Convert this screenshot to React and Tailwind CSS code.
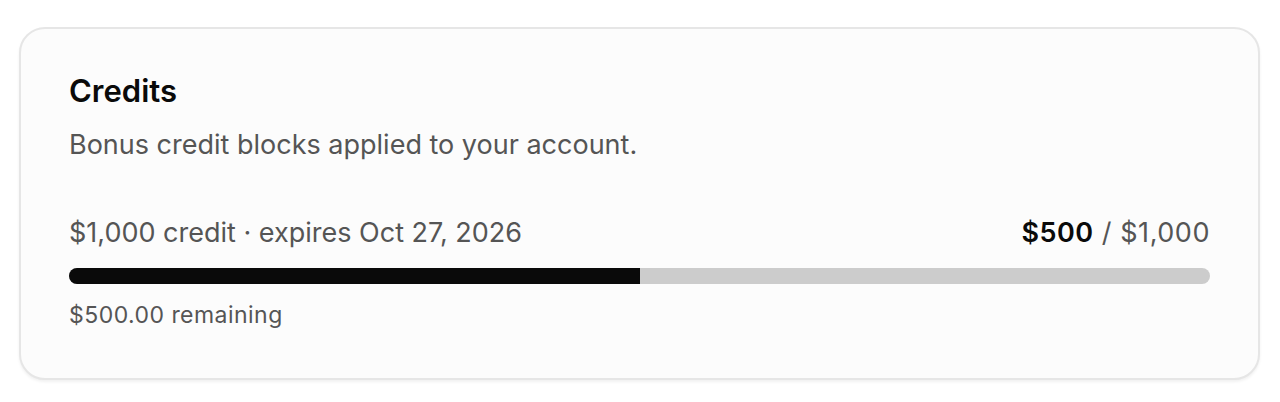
import React from "react";

const CreditsCard = () => {
    const used = 500;
    const total = 1000;
    const pct = (used / total) * 100;

    return (
        <div className="rounded-[26px] border-2 border-[#e6e6e6] bg-[#fcfcfc] px-12 pt-[43px] pb-[48px] shadow-[0_2px_3px_rgba(0,0,0,0.06)]">
            <h2 className="text-[31px] font-semibold leading-[38px] text-[#0a0a0a]">Credits</h2>
            <p className="mt-[18px] text-[27px] leading-[34px] text-[#555555]">
                Bonus credit blocks applied to your account.
            </p>

            <div className="mt-[54px] flex items-center justify-between text-[27px] leading-[34px] text-[#555555]">
                <span>$1,000 credit · expires Oct 27, 2026</span>
                <span className="tracking-[0.02em]">
                    <span className="font-semibold text-[#0a0a0a]">$500</span> / $1,000
                </span>
            </div>

            <div className="mt-[18px] h-4 w-full overflow-hidden rounded-full bg-[#cccccc]">
                <div className="h-full bg-[#0a0a0a]" style={{ width: `${pct}%` }} />
            </div>

            <p className="mt-[16px] text-[23px] leading-[30px] tracking-[0.02em] text-[#555555]">$500.00 remaining</p>
        </div>
    );
};

export default function App() {
    return (
        <div className="min-h-[402px] bg-white pl-[19px] pr-[20px] pt-[27px] font-['Inter',sans-serif]">
            <CreditsCard />
        </div>
    );
}
